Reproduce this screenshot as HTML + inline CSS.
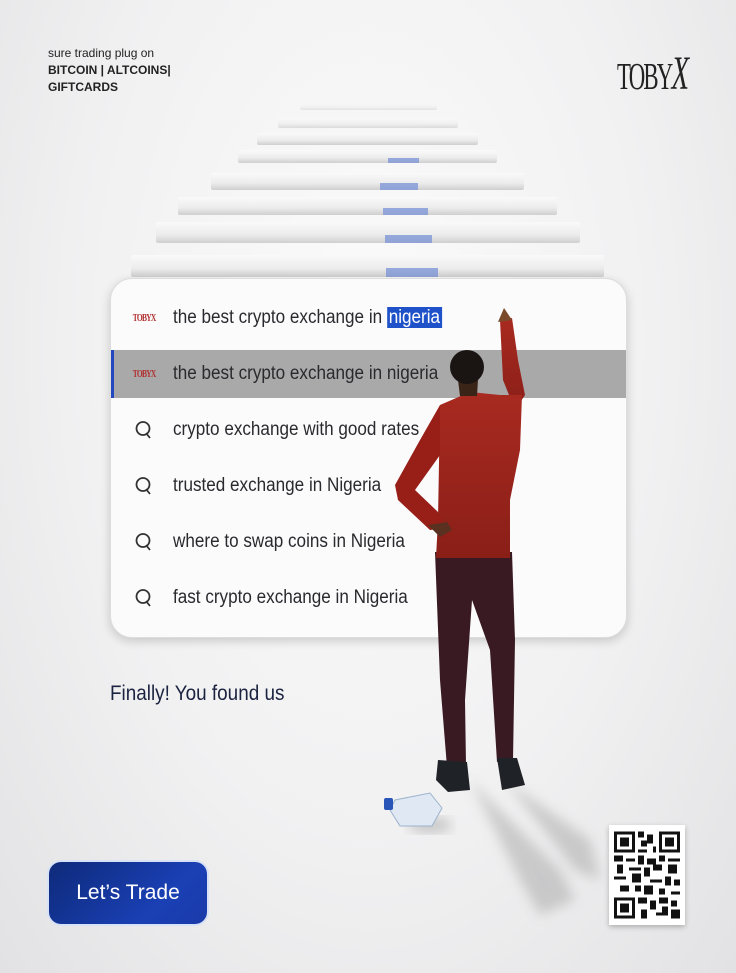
<!DOCTYPE html>
<html><head><meta charset="utf-8"><style>
*{margin:0;padding:0;box-sizing:border-box}
body{width:736px;height:973px;overflow:hidden;font-family:"Liberation Sans",sans-serif;background:radial-gradient(ellipse at 50% 35%,#fbfbfb 0%,#f1f1f2 55%,#e2e2e4 100%);position:relative}
.abs{position:absolute}
.strip{position:absolute;background:linear-gradient(#fafafa,#ececec 60%,#cfcfcf);border-radius:2px}
.strip i{position:absolute;bottom:0;height:40%;background:#7f97d8;width:12%;opacity:.8}
.card{left:110px;top:278px;width:517px;height:360px;background:#fbfbfc;border-radius:22px;box-shadow:0 3px 10px rgba(0,0,0,.18);border:1px solid #ddd;overflow:hidden}
.row{position:absolute;left:0;width:100%;height:48px;display:flex;align-items:center;font-size:19px;color:#2a2a2e}
.row .ic{width:62px;display:flex;justify-content:center;padding-left:4px}
.row .t{display:inline-block;transform:scaleX(.9);transform-origin:left;white-space:nowrap}
.tl{font-size:10px;font-weight:bold;color:#b03030;font-family:"Liberation Serif",serif;letter-spacing:-1px;transform:scaleX(.75);display:inline-block}
</style></head><body>
<div class="abs" style="left:48px;top:45px;font-size:12px;color:#222;line-height:17px">sure trading plug on<br><b>BITCOIN | ALTCOINS|<br>GIFTCARDS</b></div>
<div class="abs" style="left:617px;top:52px;font-family:'Liberation Serif',serif;font-size:38px;color:#222;letter-spacing:-3px;transform:scaleX(.6);transform-origin:left;line-height:44px">TOBY<span style="font-size:48px;font-style:italic">X</span></div>

<div class="strip" style="left:300px;top:103px;width:137px;height:7px;opacity:.5"></div>
<div class="strip" style="left:278px;top:118px;width:180px;height:10px;opacity:.7"></div>
<div class="strip" style="left:257px;top:133px;width:221px;height:12px"></div>
<div class="strip" style="left:238px;top:150px;width:259px;height:13px"><i style="left:58%"></i></div>
<div class="strip" style="left:211px;top:173px;width:313px;height:17px"><i style="left:54%"></i></div>
<div class="strip" style="left:178px;top:197px;width:379px;height:18px"><i style="left:54%"></i></div>
<div class="strip" style="left:156px;top:222px;width:424px;height:21px"><i style="left:54%;width:11%"></i></div>
<div class="strip" style="left:131px;top:255px;width:473px;height:22px"><i style="left:54%;width:11%"></i></div>

<div class="abs card">
 <div class="row" style="top:15px"><div class="ic"><span class="tl">TOBYX</span></div><div class="t">the best crypto exchange in <span style="background:#1f52c8;color:#fff;padding:0 2px">nigeria</span></div></div>
 <div class="row" style="top:71px;background:#a9a9a9;border-left:3px solid #2448c0"><div class="ic" style="margin-left:-3px"><span class="tl">TOBYX</span></div><div class="t">the best crypto exchange in nigeria</div></div>
 <div class="row" style="top:127px"><div class="ic"><svg width="18" height="20" viewBox="0 0 18 20"><circle cx="8" cy="8.5" r="6.5" fill="none" stroke="#333" stroke-width="1.8"/><path d="M11 13l4 5" stroke="#333" stroke-width="1.8"/></svg></div><div class="t">crypto exchange with good rates</div></div>
 <div class="row" style="top:183px"><div class="ic"><svg width="18" height="20" viewBox="0 0 18 20"><circle cx="8" cy="8.5" r="6.5" fill="none" stroke="#333" stroke-width="1.8"/><path d="M11 13l4 5" stroke="#333" stroke-width="1.8"/></svg></div><div class="t">trusted exchange in Nigeria</div></div>
 <div class="row" style="top:239px"><div class="ic"><svg width="18" height="20" viewBox="0 0 18 20"><circle cx="8" cy="8.5" r="6.5" fill="none" stroke="#333" stroke-width="1.8"/><path d="M11 13l4 5" stroke="#333" stroke-width="1.8"/></svg></div><div class="t">where to swap coins in Nigeria</div></div>
 <div class="row" style="top:295px"><div class="ic"><svg width="18" height="20" viewBox="0 0 18 20"><circle cx="8" cy="8.5" r="6.5" fill="none" stroke="#333" stroke-width="1.8"/><path d="M11 13l4 5" stroke="#333" stroke-width="1.8"/></svg></div><div class="t">fast crypto exchange in Nigeria</div></div>
</div>

<div class="abs" style="left:110px;top:682px;font-size:21px;color:#1c2340;transform:scaleX(.9);transform-origin:left">Finally! You found us</div>

<svg class="abs" style="left:0;top:0" width="736" height="973">
 <defs><linearGradient id="sh" x1="0" y1="0" x2="0" y2="1"><stop offset="0" stop-color="#a82a20"/><stop offset="1" stop-color="#8a1f18"/></linearGradient>
 <filter id="bl"><feGaussianBlur stdDeviation="6"/></filter></defs>
 <path d="M470 780 L560 870 L575 900 L540 915 L520 880 Z M505 780 L590 840 L600 880 L575 870 Z" fill="#888" opacity=".35" filter="url(#bl)"/>
 <ellipse cx="430" cy="825" rx="22" ry="8" fill="#888" opacity=".4" filter="url(#bl)"/>
 <path d="M390 810 L395 800 L430 793 L442 808 L432 826 L400 826 Z" fill="#dfe8f3" stroke="#9cb2cc"/>
 <rect x="384" y="798" width="9" height="12" rx="2" fill="#2a55b8"/>
 <path d="M435 552 L512 552 L515 640 L513 760 L497 762 L490 650 L472 600 L465 700 L466 765 L447 767 L440 680 Z" fill="#3a1a22"/>
 <path d="M438 760 L467 762 L470 790 L448 792 L436 780 Z M497 758 L517 758 L525 785 L502 790 Z" fill="#1f2226"/>
 <path d="M500 320 L512 318 L518 360 L525 395 L515 410 L503 380 Z" fill="url(#sh)"/>
 <path d="M498 322 L504 308 L512 320 Z" fill="#7a4a2a"/>
 <path d="M440 405 L470 392 L500 395 L522 395 L520 450 L510 500 L510 558 L436 558 L438 520 Z" fill="url(#sh)"/>
 <path d="M440 405 L420 440 L395 485 L398 500 L430 530 L445 528 L438 512 L415 490 L440 455 Z" fill="#981f18"/>
 <path d="M428 525 L447 522 L452 530 L440 537 Z" fill="#5a3020"/>
 <path d="M458 380 L478 380 L477 396 L460 396 Z" fill="#3a2418"/>
 <circle cx="467" cy="367" r="17" fill="#1a1412"/>
</svg>

<div class="abs" style="left:49px;top:862px;width:158px;height:62px;border-radius:12px;background:linear-gradient(135deg,#0e2a7a,#1a40b5 70%,#1a3aa8);box-shadow:0 0 0 2px #d8e2f6;color:#fff;font-size:21px;display:flex;align-items:center;justify-content:center">Let’s Trade</div>

<div class="abs" style="left:609px;top:825px;width:76px;height:100px;background:#fff;box-shadow:0 2px 5px rgba(0,0,0,.25);padding:6px 5px">
<svg width="66" height="88" viewBox="0 0 22 29" shape-rendering="crispEdges">
<rect x="0" y="0" width="7" height="7" fill="#111"/><rect x="1" y="1" width="5" height="5" fill="#fff"/><rect x="2" y="2" width="3" height="3" fill="#111"/>
<rect x="15" y="0" width="7" height="7" fill="#111"/><rect x="16" y="1" width="5" height="5" fill="#fff"/><rect x="17" y="2" width="3" height="3" fill="#111"/>
<rect x="0" y="22" width="7" height="7" fill="#111"/><rect x="1" y="23" width="5" height="5" fill="#fff"/><rect x="2" y="24" width="3" height="3" fill="#111"/>
<path fill="#111" d="M8 0h2v2h-2zM11 1h2v3h-2zM9 3h2v2h-2zM13 5h1v2h-1zM8 6h3v1h-3zM0 8h3v2h-3zM4 9h3v1h-3zM8 8h2v3h-2zM11 9h3v2h-3zM15 8h2v2h-2zM18 9h4v1h-4zM1 11h2v3h-2zM5 12h4v1h-4zM10 12h2v3h-2zM13 11h3v2h-3zM18 11h3v3h-3zM0 15h4v1h-4zM6 14h3v3h-3zM12 16h4v1h-4zM17 15h2v3h-2zM20 16h2v2h-2zM2 18h3v2h-3zM7 18h2v2h-2zM10 18h3v3h-3zM15 19h2v2h-2zM19 20h3v1h-3zM8 22h3v2h-3zM12 23h2v3h-2zM15 22h3v2h-3zM19 23h2v2h-2zM9 26h2v3h-2zM14 27h4v1h-4zM19 26h3v3h-3zM16 25h2v2h-2z"/>
</svg></div>
</body></html>
